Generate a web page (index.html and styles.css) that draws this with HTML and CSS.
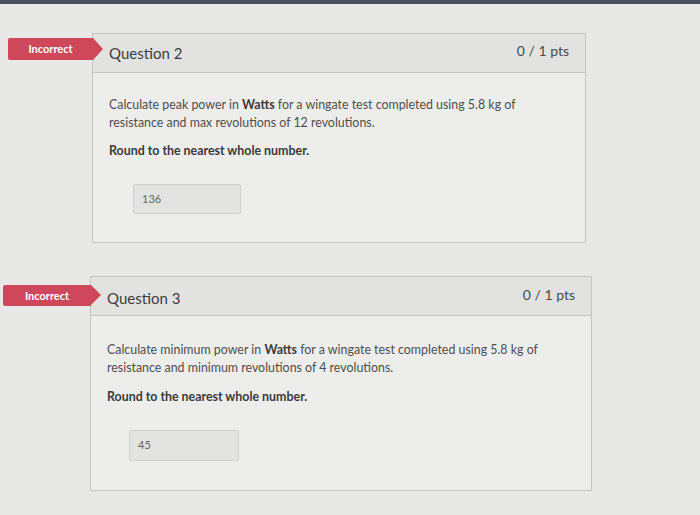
FILE: index.html
```html
<!DOCTYPE html>
<html lang="en">
<head>
  <meta charset="UTF-8">
  <meta name="viewport" content="width=device-width, initial-scale=1.0">
  <title>Quiz results</title>
  <link rel="stylesheet" href="styles.css">
</head>
<body>
  <div class="top-bar"></div>

  <main class="quiz">
    <div class="question question-2">
      <span class="answer-flag">Incorrect</span>
      <div class="question-header">
        <span class="question-name">Question 2</span>
        <span class="question-points">0 / 1 pts</span>
      </div>
      <div class="question-body">
        <p class="question-text">Calculate peak power in <strong>Watts</strong> for a wingate test completed using 5.8 kg of resistance and max revolutions of 12 revolutions.</p>
        <p><strong>Round to the nearest whole number.</strong></p>
        <div class="answer-box">136</div>
      </div>
    </div>

    <div class="question question-3">
      <span class="answer-flag">Incorrect</span>
      <div class="question-header">
        <span class="question-name">Question 3</span>
        <span class="question-points">0 / 1 pts</span>
      </div>
      <div class="question-body">
        <p class="question-text">Calculate minimum power in <strong>Watts</strong> for a wingate test completed using 5.8 kg of resistance and minimum revolutions of 4 revolutions.</p>
        <p><strong>Round to the nearest whole number.</strong></p>
        <div class="answer-box">45</div>
      </div>
    </div>
  </main>
</body>
</html>
```

FILE: styles.css
```css
body {
  font-family: 'Lato', 'Noto Sans', sans-serif;
  background: #e8e8e6;
  margin: 0;
  padding: 0;
  color: #4d4d4d;
  height: 515px;
  overflow: hidden;
}

.top-bar {
  height: 4px;
  background: #4b5360;
}

.quiz {
  padding-top: 29px;
}

.question {
  position: relative;
  border: 1px solid #c4c4c2;
  background: #ededeb;
}

.question-2 {
  margin-left: 92px;
  width: 492px;
  height: 208px;
}

.question-3 {
  margin-top: 33px;
  margin-left: 90px;
  width: 500px;
  height: 213px;
}

.answer-flag {
  position: absolute;
  top: 4px;
  left: -85px;
  width: 85px;
  height: 22px;
  line-height: 22px;
  background: #cf475b;
  color: #fff;
  font-size: 11px;
  font-weight: bold;
  text-align: center;
  border-radius: 2px 0 0 2px;
}

.answer-flag::after {
  content: "";
  position: absolute;
  top: 0;
  right: -10px;
  border-top: 11px solid transparent;
  border-bottom: 11px solid transparent;
  border-left: 10px solid #cf475b;
}

.question-3 .answer-flag {
  top: 8px;
  left: -88px;
  width: 88px;
  height: 21px;
  line-height: 21px;
}

.question-3 .answer-flag::after {
  border-top-width: 10.5px;
  border-bottom-width: 10.5px;
}

.question-header {
  display: flex;
  justify-content: space-between;
  align-items: center;
  height: 38px;
  padding: 0 16px 0 16px;
  background: #e2e2e0;
  border-bottom: 1px solid #c4c4c2;
}

.question-name {
  font-size: 15px;
  color: #3d3d3d;
}

.question-points {
  font-size: 14px;
  color: #4a4a4a;
  padding-bottom: 6px;
}

.question-3 .question-name {
  padding-top: 4px;
}

.question-3 .question-points {
  padding-bottom: 4px;
}

.question-body {
  padding: 23px 16px 0 16px;
  font-size: 12.4px;
  line-height: 18px;
}

.question-3 .question-body {
  padding-top: 25px;
}

.question-body p {
  margin: 0 0 10px 0;
}

.question-3 .question-body p {
  margin-bottom: 11px;
}

.question-2 .question-text {
  max-width: 412px;
}

.question-body strong {
  color: #3a3a3a;
}

.answer-box {
  margin: 24px 0 0 24px;
  width: 98px;
  height: 28px;
  line-height: 28px;
  padding-left: 8px;
  background: #e3e3e1;
  border: 1px solid #cfcfcd;
  border-radius: 2px;
  font-size: 11px;
  color: #666;
}

.question-3 .answer-box {
  margin: 24px 0 0 22px;
  width: 100px;
  height: 29px;
}
```
